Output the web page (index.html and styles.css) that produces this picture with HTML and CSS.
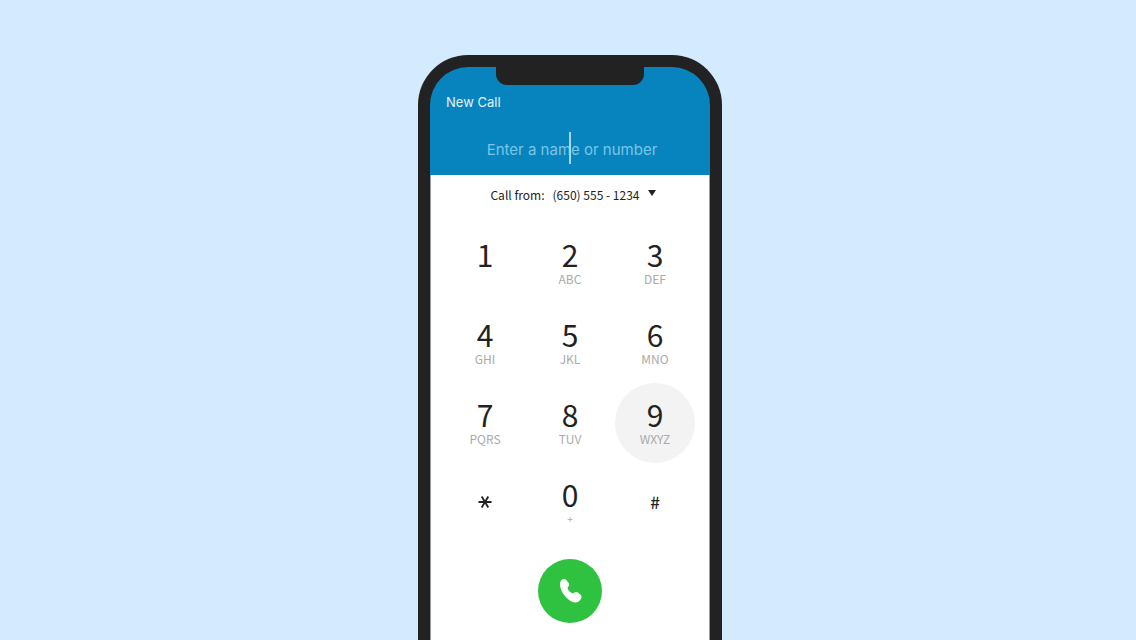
FILE: index.html
```html
<!DOCTYPE html>
<html lang="en">
<head>
    <meta charset="utf-8">
    <title>New Call</title>
    <link rel="stylesheet" href="styles.css">
</head>
<body>
    <main class="phone">
        <div class="notch"></div>
        <header class="call-header">
            <h1>New Call</h1>
            <div class="entry">
                <input type="text" class="entry-input" aria-label="Name or number" placeholder="Enter a name or number">
                <span class="cursor"></span>
            </div>
        </header>

        <div class="screen">
            <div class="call-from">
                <label for="from">Call from:</label>
                <select id="from">
                    <option>(650) 555 - 1234</option>
                </select>
                <svg class="arrow" width="8" height="6" viewBox="0 0 8 6"><path d="M0 0h8L4 6z" fill="#222"/></svg>
            </div>

            <div class="keypad">
                <button class="key">1<small></small></button>
                <button class="key">2<small>ABC</small></button>
                <button class="key">3<small>DEF</small></button>
                <button class="key">4<small>GHI</small></button>
                <button class="key">5<small>JKL</small></button>
                <button class="key">6<small>MNO</small></button>
                <button class="key">7<small>PQRS</small></button>
                <button class="key">8<small>TUV</small></button>
                <button class="key active">9<small>WXYZ</small></button>
                <button class="key symbol" aria-label="star">
                    <svg width="14" height="14" viewBox="0 0 14 14"><path d="M0.500 7h13M3.700 1.500l6.600 11M10.300 1.500l-6.600 11" stroke="#222" stroke-width="1.800" fill="none"/></svg>
                </button>
                <button class="key">0<small class="plus">+</small></button>
                <button class="key symbol">#</button>
            </div>

            <button class="call-button" aria-label="Call">
                <svg width="24" height="26" viewBox="0 0 24 26"><path d="M3.300 2.200C4.500 1 6.900.600 8.100 1.700L10.800 5.200C11.600 6.500 11.200 7.600 10.200 8.700C9.400 9.600 9.600 10.600 10.200 11.700C11.100 13.100 12.300 14.200 13.700 15C14.700 15.500 15.300 15.400 16.100 14.800C17.200 13.900 18.500 13.800 19.800 14.600L22.600 16.700C23.800 17.700 23.900 19.400 23 20.700C21.500 23.500 19.500 24.800 16.800 24.500C13.100 24 9.500 21.300 6.500 17.600C3.800 14.300 2.200 10.200 2 6.800C1.900 4.700 2.200 3.300 3.300 2.200Z" fill="#fff"/></svg>
            </button>
        </div>
    </main>
</body>
</html>
```
FILE: styles.css
```css
* {
    box-sizing: border-box;
}
body {
    display: flex;
    flex-direction: column;
    align-items: center;
    margin: 0;
    padding: 55px 0 0 4px;
    min-height: 100vh;
    background-color: #d4eaff;
    font-family: Inter, "Noto Sans", sans-serif;
    color: #222;
}
button, input, select {
    font: inherit;
    color: inherit;
    border: none;
    background: none;
    padding: 0;
}
.phone {
    position: relative;
    display: flex;
    flex-direction: column;
    flex: 1;
    width: 304px;
    border: 12px solid #222;
    border-bottom: none;
    border-radius: 50px 50px 0 0;
    background-color: #222;
}
.notch {
    position: absolute;
    top: -1px;
    left: 50%;
    width: 148px;
    height: 19px;
    margin-left: -74px;
    border-radius: 0 0 11px 11px;
    background-color: #222;
}
.call-header {
    height: 108px;
    padding: 25px 16px 0;
    border-radius: 38px 38px 0 0;
    background-color: #0784be;
}
h1 {
    margin: 0;
    font-size: 13px;
    line-height: 20px;
    font-weight: normal;
    color: #e2f4fc;
}
.entry {
    position: relative;
    margin-top: 20px;
}
.entry-input {
    display: block;
    width: 100%;
    height: 34px;
    padding-left: 4px;
    text-align: center;
    font-size: 15px;
    color: #fff;
}
.entry-input::placeholder {
    color: #79c6e8;
    opacity: 1;
}
.cursor {
    position: absolute;
    top: 0;
    left: 50%;
    width: 2px;
    height: 32px;
    margin-left: -1px;
    background-color: #a3d8ef;
}
.screen {
    flex: 1;
    border: 1px solid #999;
    border-width: 0 1px;
    background-color: #fff;
    font-family: "Noto Sans CJK JP", "Noto Sans", sans-serif;
}
.call-from {
    display: flex;
    justify-content: center;
    align-items: center;
    gap: 8px;
    height: 38px;
    padding-left: 6px;
    font-size: 12px;
}
.call-from select {
    appearance: none;
}
.arrow {
    margin-bottom: 2px;
}
.keypad {
    display: grid;
    grid-template-columns: repeat(3, 80px);
    grid-auto-rows: 80px;
    column-gap: 5px;
    justify-content: center;
    margin-top: 10px;
}
.key {
    display: flex;
    flex-direction: column;
    align-items: center;
    padding-top: 14px;
    border-radius: 50%;
    font-size: 30px;
    line-height: 34px;
    cursor: pointer;
}
.key small {
    font-size: 12px;
    line-height: 16px;
    color: #aaa;
}
.key .plus {
    font-size: 10px;
}
.key:hover,
.key.active {
    background-color: #f3f3f3;
}
.key.symbol {
    justify-content: center;
    padding: 0 0 2px;
    font-size: 17px;
    font-weight: 500;
}
.call-button {
    display: flex;
    justify-content: center;
    align-items: center;
    width: 64px;
    height: 64px;
    margin: 16px auto 0;
    border-radius: 50%;
    background-color: #2fc240;
    cursor: pointer;
}
```
